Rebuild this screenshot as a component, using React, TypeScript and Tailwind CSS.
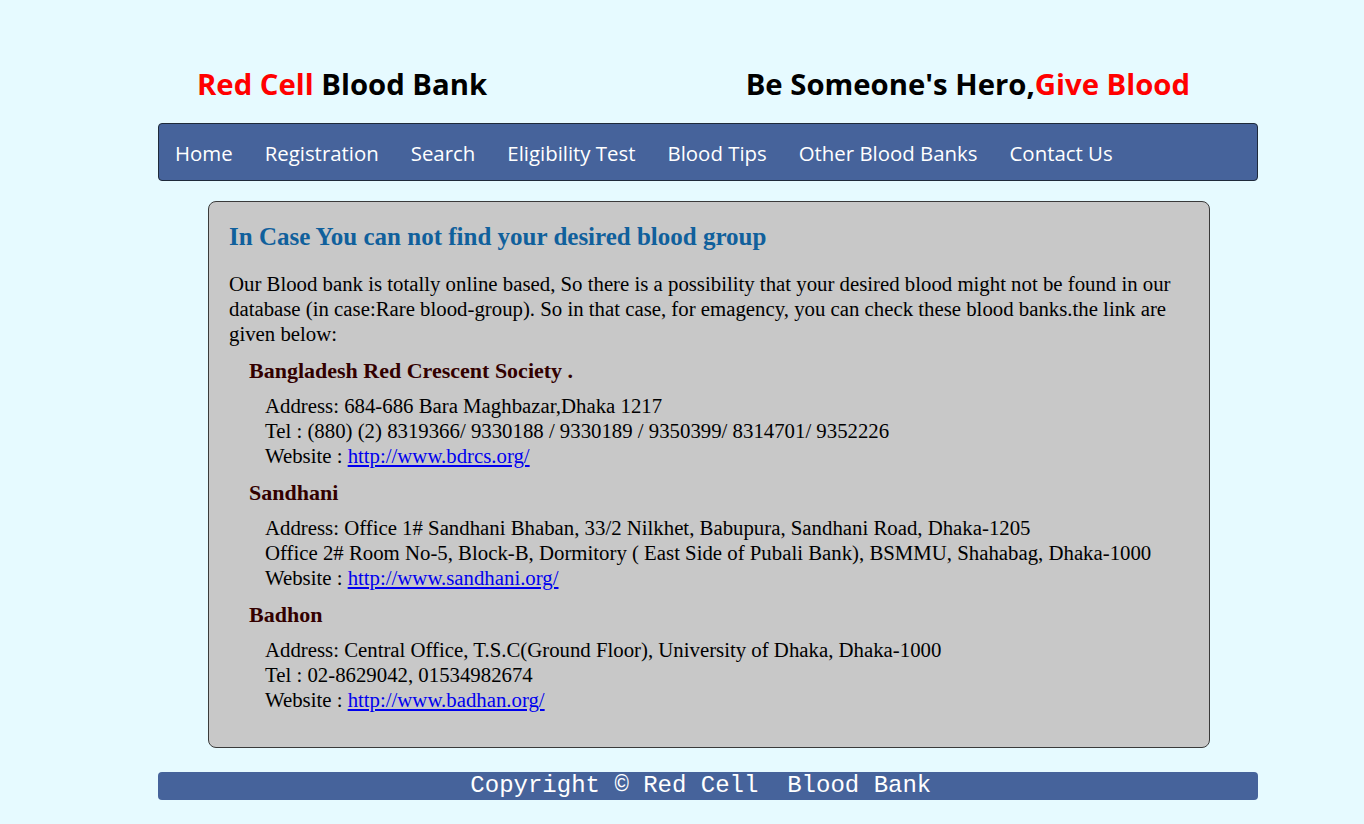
import React from "react";

const navLinks = [
  "Home",
  "Registration",
  "Search",
  "Eligibility Test",
  "Blood Tips",
  "Other Blood Banks",
  "Contact Us",
];

const banks = [
  {
    name: "Bangladesh Red Crescent Society .",
    lines: [
      "Address: 684-686 Bara Maghbazar,Dhaka 1217",
      "Tel : (880) (2) 8319366/ 9330188 / 9330189 / 9350399/ 8314701/ 9352226",
    ],
    site: "http://www.bdrcs.org/",
  },
  {
    name: "Sandhani",
    lines: [
      "Address: Office 1# Sandhani Bhaban, 33/2 Nilkhet, Babupura, Sandhani Road, Dhaka-1205",
      "Office 2# Room No-5, Block-B, Dormitory ( East Side of Pubali Bank), BSMMU, Shahabag, Dhaka-1000",
    ],
    site: "http://www.sandhani.org/",
  },
  {
    name: "Badhon",
    lines: [
      "Address: Central Office, T.S.C(Ground Floor), University of Dhaka, Dhaka-1000",
      "Tel : 02-8629042, 01534982674",
    ],
    site: "http://www.badhan.org/",
  },
];

function App() {
  return (
    <div className="min-h-screen bg-[#e6faff]">
      <div className="w-[1100px] ml-[158px]">
        {/* header */}
        <div className="h-[123px] pt-[45px] flex items-center justify-between pl-[39px] pr-[68px] font-['Comic_Sans_MS','Open_Sans',sans-serif] text-[29.3px] font-bold leading-[40px]">
          <h1>
            <span className="text-[#ff0000]">Red Cell</span>{" "}
            <span className="text-black">Blood Bank</span>
          </h1>
          <h1 className="text-black">
            Be Someone's Hero,<span className="text-[#ff0000]">Give Blood</span>
          </h1>
        </div>

        {/* nav */}
        <nav className="h-[58px] flex items-center bg-[#46639b] border border-[#1f2a3a] rounded-[4px] font-['Comic_Sans_MS','Open_Sans',sans-serif] text-[20.4px] leading-[30px] pt-[2px] text-white">
          {navLinks.map((l) => (
            <a key={l} href="#" className="px-4">
              {l}
            </a>
          ))}
        </nav>

        {/* content */}
        <div className="mt-[20px] ml-[50px] w-[1002px] bg-[#c8c8c8] border border-[#3a3a3a] rounded-[8px] px-[20px] pt-[20px] pb-[35px] font-['Liberation_Serif',serif] text-black">
          <h2 className="text-[25px] font-bold leading-[30px] text-[#10609c]">
            In Case You can not find your desired blood group
          </h2>
          <p className="mt-[19px] text-[20.8px] leading-[25px]">
            Our Blood bank is totally online based, So there is a possibility that your desired blood
            might not be found in our database (in case:Rare blood-group). So in that case, for
            emagency, you can check these blood banks.the link are given below:
          </p>
          {banks.map((b) => (
            <div key={b.name} className="mt-[12px] pl-[20px]">
              <h3 className="text-[22px] font-bold leading-[25px] text-[#330000]">{b.name}</h3>
              <div className="mt-[10px] pl-[16px] text-[20.8px] leading-[25px]">
                {b.lines.map((t) => (
                  <div key={t}>{t}</div>
                ))}
                <div>
                  Website :{" "}
                  <a href="#" className="text-[#0000ee] underline">
                    {b.site}
                  </a>
                </div>
              </div>
            </div>
          ))}
        </div>

        {/* footer */}
        <div className="mt-[24px] h-[28px] bg-[#46639b] rounded-[4px] text-center text-white font-['Liberation_Mono',monospace] text-[24px] leading-[28px] whitespace-pre">
          {"Copyright © Red Cell  Blood Bank "}
        </div>
      </div>
    </div>
  );
}

export default App;
